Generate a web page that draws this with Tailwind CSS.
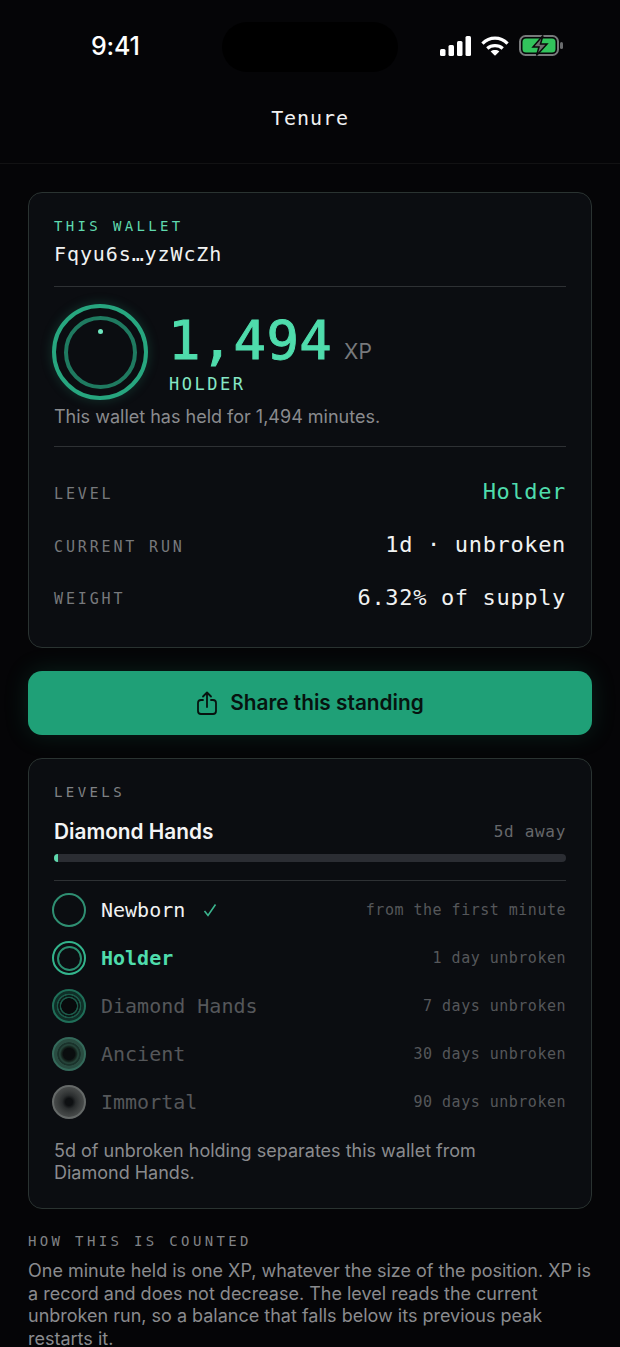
<!DOCTYPE html>
<html lang="en">
<head>
<meta charset="UTF-8">
<meta name="viewport" content="width=device-width, initial-scale=1.0">
<title>Tenure</title>
<script src="https://cdn.jsdelivr.net/npm/@tailwindcss/browser@4"></script>
</head>
<body class="bg-[#050507] font-['Inter',sans-serif] text-white w-[620px] h-[1347px] overflow-hidden">

<!-- status bar + title -->
<header class="h-[164px] border-b border-white/5 flex flex-col">
    <div class="h-[104px] relative flex items-start justify-between">
        <span class="ml-[91px] mt-[30px] text-[25px] leading-[32px] font-medium tracking-[-0.2px]">9:41</span>
        <div class="absolute left-[222px] top-[22px] w-[176px] h-[50px] rounded-[25px] bg-black"></div>
        <div class="mr-[56px] mt-[35px] flex items-center gap-[10px]">
            <svg width="31" height="20" viewBox="0 0 31 20" fill="#fff">
                <rect x="0" y="13" width="5.5" height="7" rx="1.5"/>
                <rect x="8.500" y="9" width="5.500" height="11" rx="1.500"/>
                <rect x="17" y="5" width="5.500" height="15" rx="1.500"/>
                <rect x="25.500" y="0" width="5.500" height="20" rx="1.500"/>
            </svg>
            <svg width="28" height="20" viewBox="0 0 29 20" fill="none" stroke="#fff" stroke-width="3.400">
                <path d="M1.500 7.500C9 0 20 0 27.500 7.500"/>
                <path d="M6.500 12.500C11 8.500 18 8.500 22.500 12.500"/>
                <path d="M14.500 20l-4.500-4.400C12.500 13.800 16.500 13.800 19 15.600z" fill="#fff" stroke="none"/>
            </svg>
            <svg width="45" height="21" viewBox="0 0 45 21" fill="none">
                <rect x="1" y="1" width="38" height="19" rx="5.500" stroke="#77797a" stroke-width="2"/>
                <rect x="3.500" y="3.500" width="33" height="14" rx="3.500" fill="#32c45c"/>
                <rect x="41" y="7" width="3" height="7" rx="1.500" fill="#6a6c6d"/>
                <path d="M24 0.500L14 12h6l-2.500 8.500L28 9h-6.500z" fill="#6f7171" stroke="#0a0a0a" stroke-width="1.500"/>
            </svg>
        </div>
    </div>
    <div class="text-center font-['DejaVu_Sans_Mono',monospace] text-[20px] leading-[28px] tracking-[0.9px] text-[#f1f2f2]">Tenure</div>
</header>

<main class="px-[28px] pt-[28px]">
    <!-- wallet card -->
    <section class="h-[456px] rounded-[14px] border border-[#2a3331] bg-[#0b0d11] px-[25px] pt-[23px]">
        <p class="font-['DejaVu_Sans_Mono',monospace] text-[14px] leading-[20px] tracking-[3.350px] text-[#5fd9ae]">THIS WALLET</p>
        <p class="mt-[5px] font-['DejaVu_Sans_Mono',monospace] text-[20px] leading-[26px] tracking-[0.9px] text-[#f1f2f2]">Fqyu6s…yzWcZh</p>
        <div class="mt-[19px] border-t border-[#2e3134]"></div>
        <div class="mt-[17px] flex h-[97px]">
            <div class="relative -ml-[2px] w-[96px] h-[96px] rounded-full border-[4px] border-[#27a67f] shadow-[0_0_12px_rgba(39,166,127,0.25)] flex items-center justify-center shrink-0">
                <div class="w-[73px] h-[73px] rounded-full border-[4px] border-[#1f7a60]"></div>
                <div class="absolute top-[21px] left-[42px] w-[5px] h-[5px] rounded-full bg-[#6ee7bf]"></div>
            </div>
            <div class="ml-[21px] mt-[7px]">
                <div class="flex items-baseline">
                    <span class="font-['DejaVu_Sans_Mono',monospace] text-[54px] leading-[60px] tracking-[0.3px] -ml-[1px] text-[#4fdcac] [-webkit-text-stroke:1px_#4fdcac]">1,494</span>
                    <span class="ml-[12px] text-[21px] text-[#77797c]">XP</span>
                </div>
                <p class="mt-[2px] font-['DejaVu_Sans_Mono',monospace] text-[17px] leading-[22px] tracking-[2.500px] text-[#86e8c6]">HOLDER</p>
            </div>
        </div>
        <p class="mt-[4px] text-[18px] leading-[24px] text-[#8a8b8e]">This wallet has held for 1,494 minutes.</p>
        <div class="mt-[17px] border-t border-[#2e3134]"></div>
        <dl class="mt-[18px] font-['DejaVu_Sans_Mono',monospace]">
            <div class="h-[53px] flex items-center justify-between">
                <dt class="pt-[6px] text-[15px] tracking-[2.850px] text-[#77797c]">LEVEL</dt>
                <dd class="text-[22px] tracking-[0.650px] text-[#4fdcac]">Holder</dd>
            </div>
            <div class="h-[53px] flex items-center justify-between">
                <dt class="pt-[6px] text-[15px] tracking-[2.850px] text-[#77797c]">CURRENT RUN</dt>
                <dd class="text-[22px] tracking-[0.650px] text-[#f1f2f2]">1d · unbroken</dd>
            </div>
            <div class="h-[53px] flex items-center justify-between">
                <dt class="pt-[4px] text-[15px] tracking-[2.850px] text-[#77797c]">WEIGHT</dt>
                <dd class="text-[22px] tracking-[0.650px] text-[#f1f2f2]">6.32% of supply</dd>
            </div>
        </dl>
    </section>

    <!-- share -->
    <button class="mt-[23px] w-full h-[64px] rounded-[14px] bg-[#1fa077] shadow-[0_0_24px_rgba(31,160,119,0.18)] flex items-center justify-center gap-[13px] text-[#07130f]">
        <svg class="ml-[1px]" width="20" height="24" viewBox="0 0 20 24" fill="none" stroke="currentColor" stroke-width="1.800" stroke-linecap="round" stroke-linejoin="round">
            <path d="M6 9H4a3 3 0 0 0-3 3v8a3 3 0 0 0 3 3h12a3 3 0 0 0 3-3v-8a3 3 0 0 0-3-3h-2"/>
            <path d="M10 16V1.500M6 5.500l4-4 4 4"/>
        </svg>
        <span class="text-[20.8px] font-semibold">Share this standing</span>
    </button>

    <!-- levels -->
    <section class="mt-[23px] h-[451px] rounded-[14px] border border-[#2a3331] bg-[#0b0d11] px-[25px] pt-[23px]">
        <p class="font-['DejaVu_Sans_Mono',monospace] text-[14px] leading-[20px] tracking-[3.400px] text-[#808285]">LEVELS</p>
        <div class="mt-[17px] flex items-center justify-between h-[26px]">
            <span class="text-[20.8px] font-semibold text-[#f4f4f5]">Diamond Hands</span>
            <span class="font-['DejaVu_Sans_Mono',monospace] text-[16px] tracking-[0.700px] text-[#66686b]">5d away</span>
        </div>
        <div class="mt-[9px] h-[8px] rounded-full bg-[#2b2d33] overflow-hidden">
            <div class="h-full w-[4px] bg-[#5fd9ae]"></div>
        </div>
        <div class="mt-[18px] border-t border-[#2e3134]"></div>
        <ul class="mt-[5px] font-['DejaVu_Sans_Mono',monospace]">
            <li class="h-[48px] flex items-center">
                <div class="-ml-[2px] w-[34px] h-[34px] rounded-full border-[2px] border-[#2f8f72] shrink-0"></div>
                <span class="ml-[15px] text-[20px] text-[#f1f2f2]">Newborn</span>
                <svg class="ml-[18px]" width="14" height="14" viewBox="0 0 14 14" fill="none" stroke="#3bb48e" stroke-width="1.600"><path d="M1.500 8l3.500 4.500L12.500 1.500"/></svg>
                <span class="ml-auto text-[15px] tracking-[0.500px] text-[#55575a]">from the first minute</span>
            </li>
            <li class="h-[48px] flex items-center">
                <div class="-ml-[2px] w-[34px] h-[34px] rounded-full border-[2.500px] border-[#33b48c] shrink-0 flex items-center justify-center">
                    <div class="w-[25px] h-[25px] rounded-full border-[2px] border-[#2a8f70]"></div>
                </div>
                <span class="ml-[15px] text-[20px] font-bold text-[#4fdcac]">Holder</span>
                <span class="ml-auto text-[15px] tracking-[0.500px] text-[#55575a]">1 day unbroken</span>
            </li>
            <li class="h-[48px] flex items-center">
                <div class="-ml-[2px] w-[34px] h-[34px] rounded-full border-[2px] border-[#1f6e58] bg-[radial-gradient(circle_closest-side,#080a0c_0_50%,#1b5a49_54%_60%,#0c1a18_64%_70%,#1b5a49_74%_80%,#0f2e27_84%_100%)] shrink-0"></div>
                <span class="ml-[15px] text-[20px] text-[#55575a]">Diamond Hands</span>
                <span class="ml-auto text-[15px] tracking-[0.500px] text-[#55575a]">7 days unbroken</span>
            </li>
            <li class="h-[48px] flex items-center">
                <div class="-ml-[2px] w-[34px] h-[34px] rounded-full border-[2px] border-[#34695a] bg-[radial-gradient(circle_closest-side,#0a0d0e_0_38%,#16261f_50%,#254339_60%_64%,#1a322b_70%_76%,#294c41_80%_100%)] shrink-0"></div>
                <span class="ml-[15px] text-[20px] text-[#55575a]">Ancient</span>
                <span class="ml-auto text-[15px] tracking-[0.500px] text-[#55575a]">30 days unbroken</span>
            </li>
            <li class="h-[48px] flex items-center">
                <div class="-ml-[2px] w-[34px] h-[34px] rounded-full border-[2px] border-[#656968] bg-[radial-gradient(circle_closest-side,#0e1012_0_24%,#2a2d2e_46%,#3a3d3d_72%,#484b4b_100%)] shrink-0"></div>
                <span class="ml-[15px] text-[20px] text-[#55575a]">Immortal</span>
                <span class="ml-auto text-[15px] tracking-[0.500px] text-[#55575a]">90 days unbroken</span>
            </li>
        </ul>
        <p class="mt-[14px] w-[440px] text-[18px] leading-[22px] text-[#8a8b8e]">5d of unbroken holding separates this wallet from Diamond Hands.</p>
    </section>

    <!-- footnote -->
    <p class="mt-[22px] font-['DejaVu_Sans_Mono',monospace] text-[14px] leading-[20px] tracking-[3.350px] text-[#808285]">HOW THIS IS COUNTED</p>
    <p class="mt-[9px] text-[18px] leading-[22.5px] text-[#8a8b8e]">One minute held is one XP, whatever the size of the position. XP is a record and does not decrease. The level reads the current unbroken run, so a balance that falls below its previous peak restarts it.</p>
</main>
</body>
</html>
